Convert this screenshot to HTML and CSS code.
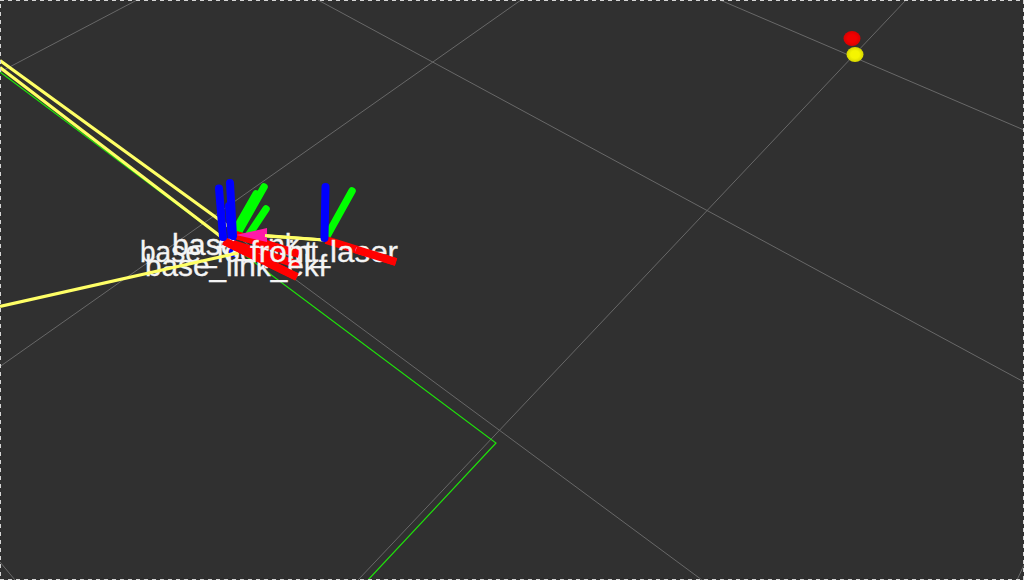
FILE: index.html
```html
<!DOCTYPE html>
<html lang="en">
<head>
<meta charset="utf-8">
<title>Robot view</title>
<link rel="stylesheet" href="styles.css">
</head>
<body>
<svg class="scene" viewBox="0 0 1024 580" role="img" aria-label="Transform frames">
  <defs>
    <radialGradient id="red-ball"><stop offset=".5" stop-color="#f20000"/><stop offset="1" stop-color="#d80000"/></radialGradient>
    <radialGradient id="yellow-ball"><stop offset=".5" stop-color="#f5f500"/><stop offset="1" stop-color="#d6d600"/></radialGradient>
  </defs>
  <g class="grid">
    <path d="M0 72L137 0M0 366.500L521 0M358 580L906 0M318 0L1024 382M720 0L1024 130M240 238.500L702 580M0 562L15 580M1024 565L1017 580"/>
  </g>
  <path class="path" d="M0 72L496 443L368 580"/>
  <g class="link">
    <path d="M0 60.500L232 229M0 67.500L224 239M236 234L324 240"/>
  </g>
  <g class="axis green">
    <path d="M236 229L256 194M238 233L264 187M248 236L266 209"/>
    <path d="M327 236L352 191"/>
  </g>
  <path class="axis blue" d="M229 206L233 253"/>
  <g class="labels">
    <text x="172" y="255" textLength="128" lengthAdjust="spacingAndGlyphs">base_link</text>
    <text x="140" y="262" textLength="178" lengthAdjust="spacingAndGlyphs">base_footprint</text>
  </g>
  <path class="axis red" d="M236 235L299 254M233 244L299 265M224 241L297 277"/>
  <g class="labels">
    <text x="145" y="276" textLength="182" lengthAdjust="spacingAndGlyphs">base_link_ekf</text>
  </g>
  <path class="link" d="M0 306.500L238 253"/>
  <path class="axis red" d="M236 235L280 248.500M224 241L297 277"/>
  <path class="axis red" d="M326 240L396 262"/>
  <path class="arrow" d="M236 235L267 228V242Z"/>
  <path class="link" d="M265 235.500L324 240"/>
  <g class="axis blue">
    <path d="M219 188.500L223 237M230 183L233 236M325.500 187L324.500 238"/>
  </g>
  <g class="labels"><text x="250" y="262" textLength="148" lengthAdjust="spacingAndGlyphs">front_laser</text></g>
  <path class="axis red" d="M356 249.500L396 262"/>
  <ellipse class="red-dot" cx="852" cy="38.500" rx="8.500" ry="7.500"/>
  <ellipse class="yellow-dot" cx="855" cy="54.500" rx="8.500" ry="7.500"/>
  <path class="border" d="M0 .5H1024M0 579.500H1024M1023.500 0V580"/>
  <path class="border" d="M.5 4V580"/>
</svg>
</body>
</html>
```
FILE: styles.css
```css
body { margin: 0; background: #303030; overflow: hidden; }
.scene { display: block; width: 1024px; height: 580px; fill: none; }
.grid { stroke: #686868; stroke-width: 1; }
.path { stroke: #1fe00b; stroke-width: 1.2; }
.link { stroke: #ffff66; stroke-width: 3.2; }
.axis { stroke-width: 8; stroke-linecap: round; }
.green { stroke: #00ff00; stroke-width: 7.5; }
.blue { stroke: #0000ff; }
.red { stroke: #ff0000; stroke-linecap: butt; }
.arrow { fill: #ff19a8; }
.labels { fill: #f4f4f4; stroke: #f4f4f4; stroke-width: .3; font: 29px "Liberation Sans", Arial, sans-serif; }
.red-dot { fill: url(#red-ball); }
.yellow-dot { fill: url(#yellow-ball); }
.border { stroke: #d4d4d4; stroke-width: 1; stroke-dasharray: 4 4; shape-rendering: crispEdges; }
```
